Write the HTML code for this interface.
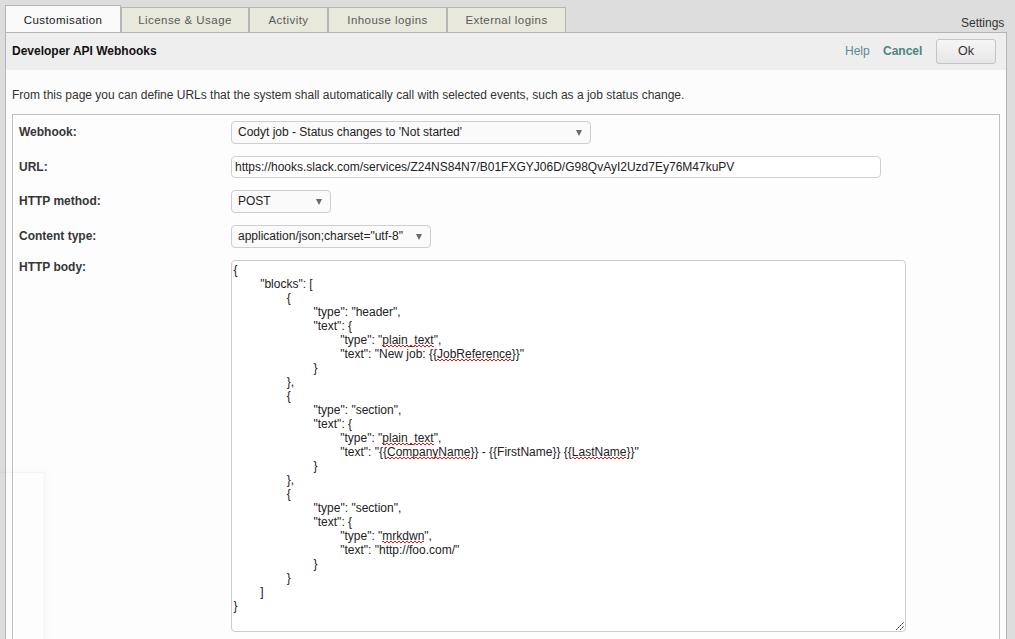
<!DOCTYPE html>
<html><head><meta charset="utf-8">
<style>
html,body{margin:0;padding:0;}
body{width:1015px;height:639px;overflow:hidden;background:#dddddd;position:relative;font-family:"Liberation Sans",sans-serif;font-size:12px;color:#333;}
.abs{position:absolute;}
.tab{position:absolute;box-sizing:border-box;border:1px solid #b5b5b5;background:#e8e8dc;color:#5a5a5a;font-size:11.5px;letter-spacing:0.45px;text-align:center;line-height:14px;white-space:nowrap;}
.tab.active{background:#f9f9f9;color:#1a1a1a;}
.panel{position:absolute;left:5px;top:32px;width:1002px;height:620px;box-sizing:border-box;border:1px solid #b5b5b5;background:#fcfcfc;}
.hdr{position:absolute;left:0;top:0;width:1000px;height:37px;background:#eeeeee;}
.txt{position:absolute;white-space:nowrap;line-height:14px;}
.fs{position:absolute;left:12px;top:114px;width:988px;height:540px;box-sizing:border-box;border:1px solid #c0c0c0;background:#fdfdfd;}
.lbl{position:absolute;left:19px;font-weight:bold;color:#363636;line-height:14px;white-space:nowrap;}
.sel{position:absolute;box-sizing:border-box;border:1px solid #cfcfcf;border-radius:4px;background:#fafafa;color:#222;}
.sel .v{position:absolute;left:6px;top:3px;line-height:14px;white-space:nowrap;}
.arr{position:absolute;width:0;height:0;border-left:3.5px solid transparent;border-right:3.5px solid transparent;border-top:6.5px solid #6e6565;}
.inp{position:absolute;box-sizing:border-box;border:1px solid #d0d0d0;border-radius:4px;background:#fff;color:#222;}
.ta{position:absolute;left:231px;top:260px;width:675px;height:372px;box-sizing:border-box;border:1px solid #cccccc;border-radius:4px;background:#fff;}
.code{position:absolute;left:1.5px;top:2px;white-space:pre;tab-size:8;-moz-tab-size:8;line-height:14px;color:#222;}
.sp{position:relative;}
.sp::after{content:"";position:absolute;left:0;right:0;bottom:0px;height:2px;background:repeating-linear-gradient(90deg,#f01010 0 2px,transparent 2px 4px) 0 0/100% 1px no-repeat,repeating-linear-gradient(90deg,transparent 0 2px,#f01010 2px 4px) 0 1px/100% 1px no-repeat;}
</style></head>
<body>
<!-- tabs -->
<div class="tab active" style="left:5px;top:5px;width:116px;height:28px;padding-top:7px;">Customisation</div>
<div class="tab" style="left:121px;top:7px;width:128px;height:26px;padding-top:5px;">License &amp; Usage</div>
<div class="tab" style="left:249px;top:7px;width:79px;height:26px;padding-top:5px;">Activity</div>
<div class="tab" style="left:328px;top:7px;width:119px;height:26px;padding-top:5px;">Inhouse logins</div>
<div class="tab" style="left:447px;top:7px;width:119px;height:26px;padding-top:5px;">External logins</div>
<div class="txt" style="left:961px;top:16px;color:#333;">Settings</div>

<div class="panel">
  <div class="hdr"></div>
</div>
<div class="txt" style="left:12px;top:44px;font-weight:bold;color:#111;">Developer API Webhooks</div>
<div class="txt" style="left:845px;top:44px;color:#588a96;">Help</div>
<div class="txt" style="left:883px;top:44px;color:#4c8585;font-weight:bold;">Cancel</div>
<div class="abs" style="left:936px;top:39px;width:60px;height:25px;box-sizing:border-box;border:1px solid #c4c4c4;border-radius:3px;background:linear-gradient(#f6f6f6,#e6e6e6);"></div>
<div class="txt" style="left:936px;top:44px;width:60px;text-align:center;color:#333;font-size:12.5px;">Ok</div>

<div class="txt" style="left:12px;top:88px;color:#333;">From this page you can define URLs that the system shall automatically call with selected events, such as a job status change.</div>

<div class="fs"></div>
<div class="lbl" style="top:125px;">Webhook:</div>
<div class="lbl" style="top:160px;">URL:</div>
<div class="lbl" style="top:194px;">HTTP method:</div>
<div class="lbl" style="top:229px;">Content type:</div>
<div class="lbl" style="top:260px;">HTTP body:</div>

<div class="sel" style="left:231px;top:121px;width:360px;height:23px;"><div class="v">Codyt job - Status changes to 'Not started'</div><div class="arr" style="left:344px;top:8px;"></div></div>
<div class="inp" style="left:231px;top:156px;width:650px;height:22px;"><div class="txt" style="left:3px;top:3px;">https://hooks.slack.com/services/Z24NS84N7/B01FXGYJ06D/G98QvAyI2Uzd7Ey76M47kuPV</div></div>
<div class="sel" style="left:231px;top:190px;width:100px;height:23px;"><div class="v">POST</div><div class="arr" style="left:84px;top:8px;"></div></div>
<div class="sel" style="left:231px;top:225px;width:200px;height:23px;"><div class="v">application/json;charset="utf-8"</div><div class="arr" style="left:184px;top:8px;"></div></div>

<div class="ta"><div class="code">{
	"blocks": [
		{
			"type": "header",
			"text": {
				"type": "<span class="sp">plain_text</span>",
				"text": "New job: {{<span class="sp">JobReference</span>}}"
			}
		},
		{
			"type": "section",
			"text": {
				"type": "<span class="sp">plain_text</span>",
				"text": "{{<span class="sp">CompanyName</span>}} - {{FirstName}} {{<span class="sp">LastName</span>}}"
			}
		},
		{
			"type": "section",
			"text": {
				"type": "<span class="sp">mrkdwn</span>",
				"text": "http://foo.com/"
			}
		}
	]
}</div>
<svg class="abs" style="left:663px;top:360px;" width="10" height="10" viewBox="0 0 10 10" shape-rendering="crispEdges"><rect x="1" y="8" width="1" height="1" fill="#3a3a3a"/><rect x="2" y="7" width="1" height="1" fill="#8a8a8a"/><rect x="3" y="6" width="1" height="1" fill="#3a3a3a"/><rect x="4" y="5" width="1" height="1" fill="#8a8a8a"/><rect x="5" y="4" width="1" height="1" fill="#3a3a3a"/><rect x="6" y="3" width="1" height="1" fill="#8a8a8a"/><rect x="7" y="2" width="1" height="1" fill="#3a3a3a"/><rect x="8" y="1" width="1" height="1" fill="#8a8a8a"/><rect x="5" y="8" width="1" height="1" fill="#3a3a3a"/><rect x="6" y="7" width="1" height="1" fill="#8a8a8a"/><rect x="7" y="6" width="1" height="1" fill="#3a3a3a"/><rect x="8" y="5" width="1" height="1" fill="#8a8a8a"/></svg>
</div>
<div class="abs" style="left:-10px;top:472px;width:55px;height:200px;box-sizing:border-box;border:1px solid rgba(0,0,0,0.03);box-shadow:0 0 12px 3px rgba(0,0,0,0.015);"></div>
</body></html>
